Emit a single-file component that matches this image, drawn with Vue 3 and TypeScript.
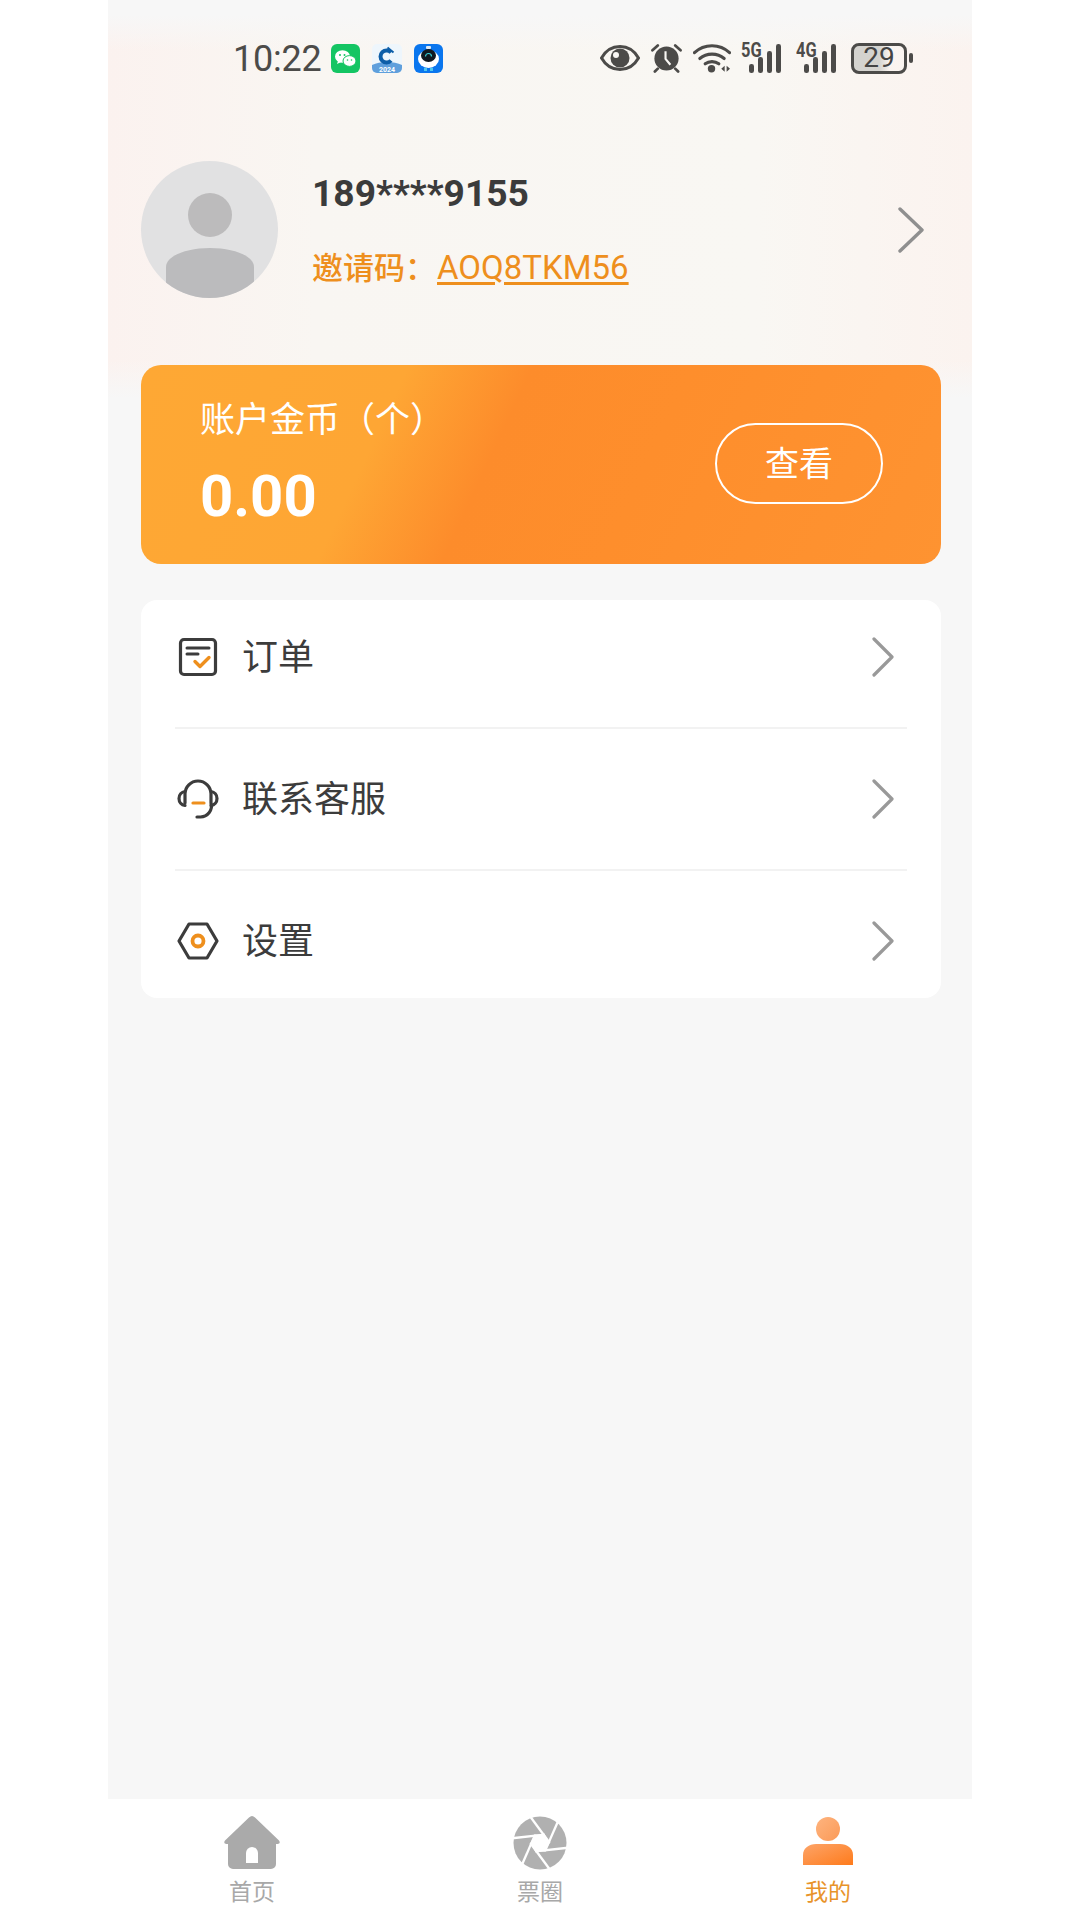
<script setup lang="ts">
const menu = [
  { key: 'order', label: '订单' },
  { key: 'service', label: '联系客服' },
  { key: 'settings', label: '设置' },
]
const tabs = [
  { key: 'home', label: '首页' },
  { key: 'circle', label: '票圈' },
  { key: 'me', label: '我的' },
]
const bars = [
  { x: 8, h: 9 }, { x: 17, h: 16 }, { x: 26, h: 22 }, { x: 35, h: 29 },
]
const blades = [0, 60, 120, 180, 240, 300]
</script>

<template>
  <div class="phone">
    <header class="status">
      <div class="status-left">
        <span class="time">10:22</span>
        <svg class="app" viewBox="0 0 29 29">
          <rect width="29" height="29" rx="6" fill="#14c563" />
          <ellipse cx="11.500" cy="12.500" rx="7.500" ry="6.300" fill="#fff" />
          <path d="M7 17l-1 3 4-2z" fill="#fff" />
          <ellipse cx="18.500" cy="17" rx="6.500" ry="5.400" fill="#fff" stroke="#14c563" stroke-width="1" />
          <circle cx="9" cy="11" r="1" fill="#14c563" />
          <circle cx="13.500" cy="11" r="1" fill="#14c563" />
          <circle cx="16.500" cy="16" r=".8" fill="#14c563" />
          <circle cx="20.500" cy="16" r=".8" fill="#14c563" />
        </svg>
        <svg class="app app-ccb" viewBox="0 0 30 29">
          <rect width="30" height="29" rx="5" fill="#eef6fc" />
          <path d="M0 21c8-4 22-4 30 0v3a5 5 0 0 1-5 5H5a5 5 0 0 1-5-5z" fill="#5f9fdc" />
          <path d="M19 8.500a6 6 0 1 0 0 8" fill="none" stroke="#0d5ea8" stroke-width="4" />
          <path d="M15.500 3.500l6 5" fill="none" stroke="#0d5ea8" stroke-width="2" />
          <text x="15" y="27.500" text-anchor="middle" class="app-year">2024</text>
        </svg>
        <svg class="app" viewBox="0 0 29 29">
          <rect width="29" height="29" rx="6" fill="#0a76ee" />
          <rect x="12" y="2" width="5" height="3" rx="1" fill="#dfeaf5" />
          <ellipse cx="14.500" cy="15" rx="10.500" ry="9" fill="#fff" />
          <ellipse cx="14.500" cy="11.500" rx="7.500" ry="6.500" fill="#101820" />
          <path d="M11.500 12.500a3 3 0 0 1 6 0" fill="none" stroke="#35d0d8" stroke-width="1.200" />
          <rect x="10" y="24" width="3" height="3" fill="#4fc8ef" />
          <rect x="16" y="24" width="3" height="3" fill="#4fc8ef" />
        </svg>
      </div>
      <div class="status-right">
        <svg class="s-eye" viewBox="0 0 40 26">
          <path d="M1.500 13C6 5 13 1.500 20 1.500S34 5 38.500 13C34 21 27 24.500 20 24.500S6 21 1.500 13z" fill="none" stroke="#4c4b49" stroke-width="3" />
          <circle cx="20" cy="13" r="9.500" fill="#4c4b49" />
          <circle cx="16" cy="10" r="3" fill="#f9f7f4" />
        </svg>
        <svg class="s-alarm" viewBox="0 0 32 30">
          <circle cx="16" cy="15.500" r="12.500" fill="#4c4b49" />
          <path d="M1.500 7L7 2M30.500 7L25 2M7 26l-3 3M25 26l3 3" stroke="#4c4b49" stroke-width="2.800" stroke-linecap="round" />
          <path d="M15 8v8l5 6" fill="none" stroke="#f9f7f4" stroke-width="2.200" />
        </svg>
        <svg class="s-wifi" viewBox="0 0 39 30">
          <path d="M1.500 9.500c10-9.500 26-9.500 36 0" fill="none" stroke="#4c4b49" stroke-width="3.200" stroke-linecap="round" />
          <path d="M7 15.500c7-6 18-6 25 0" fill="none" stroke="#4c4b49" stroke-width="3.200" stroke-linecap="round" />
          <path d="M12.500 21c4-3 10-3 14 0" fill="none" stroke="#4c4b49" stroke-width="3.200" stroke-linecap="round" />
          <circle cx="19" cy="26" r="3.800" fill="#4c4b49" />
          <path d="M29 26l3.500-3v6zM38 26l-3.500-3v6z" fill="#4c4b49" />
        </svg>
        <div class="signal">
          <span class="sig-label">5G</span>
          <svg class="sig-bars" viewBox="0 0 44 30">
            <rect v-for="b in bars" :key="b.x" :x="b.x" :y="30 - b.h" width="5" :height="b.h" rx="2.300" fill="#4c4b49" />
          </svg>
        </div>
        <div class="signal">
          <span class="sig-label">4G</span>
          <svg class="sig-bars" viewBox="0 0 44 30">
            <rect v-for="b in bars" :key="b.x" :x="b.x" :y="30 - b.h" width="5" :height="b.h" rx="2.300" fill="#4c4b49" />
          </svg>
        </div>
        <div class="battery"><span class="battery-num">29</span></div>
        <span class="battery-nub"></span>
      </div>
    </header>

    <section class="user">
      <svg class="avatar" viewBox="0 0 137 137">
        <defs>
          <clipPath id="avatar-clip"><circle cx="68.500" cy="68.500" r="68.500" /></clipPath>
        </defs>
        <circle cx="68.500" cy="68.500" r="68.500" fill="#e1e1e2" />
        <circle cx="69" cy="54" r="22" fill="#bcbbbc" />
        <path d="M25 137V106C25 95 45 87 69 87S113 95 113 106V137Z" fill="#bbbbbd" clip-path="url(#avatar-clip)" />
      </svg>
      <div class="user-info">
        <div class="user-name">189****9155</div>
        <div class="invite">
          <span class="invite-label">邀请码：</span><span class="invite-code">AOQ8TKM56</span>
        </div>
      </div>
      <svg class="user-arrow" viewBox="0 0 26 46">
        <path d="M2 2l22 21L2 44" fill="none" stroke="#8f8f8f" stroke-width="3.400" stroke-linecap="round" stroke-linejoin="round" />
      </svg>
    </section>

    <section class="coin-card">
      <div class="coin-info">
        <div class="coin-label">账户金币（个）</div>
        <div class="coin-value">0.00</div>
      </div>
      <div class="coin-btn"><span class="coin-btn-text">查看</span></div>
    </section>

    <section class="menu">
      <template v-for="(item, i) in menu" :key="item.key">
        <div v-if="i > 0" class="menu-sep"></div>
        <div class="menu-row">
          <svg v-if="item.key === 'order'" class="menu-icon" viewBox="0 0 42 42">
            <rect x="3.500" y="3.500" width="35" height="35" rx="3.500" fill="none" stroke="#3c3c3c" stroke-width="3.200" />
            <path d="M10 12h22M10 18h11" stroke="#3c3c3c" stroke-width="3" stroke-linecap="round" />
            <path d="M18 25.500l5 5 9-9" fill="none" stroke="#ee8f1d" stroke-width="3.400" stroke-linecap="round" stroke-linejoin="round" />
          </svg>
          <svg v-else-if="item.key === 'service'" class="menu-icon" viewBox="0 0 42 42">
            <path d="M8 25V16a13 13 0 0 1 26 0v9a11 11 0 0 1-11 14h-3" fill="none" stroke="#3c3c3c" stroke-width="3.200" stroke-linecap="round" />
            <path d="M8 13.500a7 7 0 0 0-6 7 7 7 0 0 0 6 7M34 13.500a7 7 0 0 1 6 7 7 7 0 0 1-6 7" fill="none" stroke="#3c3c3c" stroke-width="3.200" stroke-linecap="round" />
            <path d="M16 25h11" stroke="#ee8f1d" stroke-width="3.200" stroke-linecap="round" />
          </svg>
          <svg v-else class="menu-icon" viewBox="0 0 42 42">
            <path d="M12 4h18l10 17-10 17H12L2 21z" fill="none" stroke="#3c3c3c" stroke-width="3.200" stroke-linejoin="round" />
            <circle cx="21" cy="21" r="5.500" fill="none" stroke="#ee8f1d" stroke-width="3.800" />
          </svg>
          <span class="menu-label">{{ item.label }}</span>
          <svg class="menu-arrow" viewBox="0 0 22 40">
            <path d="M2 2l18 18L2 38" fill="none" stroke="#999" stroke-width="3.200" stroke-linecap="round" stroke-linejoin="round" />
          </svg>
        </div>
      </template>
    </section>

    <nav class="tabbar">
      <div v-for="tab in tabs" :key="tab.key" class="tab" :class="{ active: tab.key === 'me' }">
        <svg v-if="tab.key === 'home'" class="tab-icon" viewBox="0 0 58 54">
          <path d="M29 0c1 0 2 .500 3 1.500l24 23c1.500 2 .500 3.500-1.500 3.500H53v20a5 5 0 0 1-5 5H10a5 5 0 0 1-5-5V28H3.500c-2 0-3-1.500-1.500-3.500l24-23C27 .500 28 0 29 0z" fill="#aaa" />
          <path d="M23 47V37a6 6 0 0 1 12 0v10z" fill="#fff" />
        </svg>
        <svg v-else-if="tab.key === 'circle'" class="tab-icon" viewBox="0 0 54 54">
          <circle cx="27" cy="27" r="26.500" fill="#b0b0b0" />
          <polygon points="36.700,27 31.850,35.400 22.150,35.400 17.300,27 22.150,18.600 31.850,18.600" fill="#fff" />
          <g v-for="a in blades" :key="a" :transform="`rotate(${a} 27 27)`">
            <path d="M17.200 0.500L36.700 27" stroke="#fff" stroke-width="2.300" />
          </g>
        </svg>
        <svg v-else class="tab-icon" viewBox="0 0 50 54">
          <defs>
            <linearGradient id="me-head" x1="0" y1="0" x2="1" y2="1">
              <stop offset="0" stop-color="#feb47f" />
              <stop offset="1" stop-color="#fb9a57" />
            </linearGradient>
            <linearGradient id="me-body" x1="0" y1="0" x2="1" y2="1">
              <stop offset="0" stop-color="#fda468" />
              <stop offset="1" stop-color="#fe7b1c" />
            </linearGradient>
          </defs>
          <circle cx="25" cy="13" r="12" fill="url(#me-head)" />
          <path d="M0 49V39C0 32 6 28 13 28H37C44 28 50 32 50 39V49Z" fill="url(#me-body)" />
        </svg>
        <span class="tab-label">{{ tab.label }}</span>
      </div>
    </nav>
  </div>
</template>

<style scoped>
.phone {
  box-sizing: border-box;
  width: 864px;
  height: 1920px;
  margin-left: 108px;
  display: flex;
  flex-direction: column;
  background-color: #f7f7f7;
  background-image:
    linear-gradient(to bottom, #f7f7f7 15px, rgba(247, 247, 247, 0) 50px, rgba(247, 247, 247, 0) 360px, #f7f7f7 398px),
    linear-gradient(to right, #fbf2ef 0, #f9f6f2 24%, #f9f7f3 75%, #fbf3ef 100%);
  background-size: 100% 398px, 100% 398px;
  background-repeat: no-repeat;
  font-family: Roboto, "Noto Sans CJK SC", sans-serif;
  color: #3b3b3b;
}
.status {
  height: 116px;
  flex: none;
  display: flex;
  align-items: center;
  justify-content: space-between;
  padding: 0 59px 0 125px;
  color: #4c4b49;
}
.status-left, .status-right { display: flex; align-items: center; }
.time { font-size: 36px; line-height: 40px; margin-right: 9px; margin-top: 2px; letter-spacing: -0.2px; }
.app { width: 29px; height: 29px; margin-right: 12px; display: block; }
.app-ccb { width: 30px; }
.app-year { font: 700 7px Roboto, sans-serif; fill: #fff; }
.s-eye { width: 40px; height: 26px; margin-right: 11px; }
.s-alarm { width: 31px; height: 30px; margin-right: 11px; }
.s-wifi { width: 38px; height: 30px; margin-right: 10px; }
.signal { position: relative; width: 44px; height: 30px; margin-right: 11px; }
.sig-bars { display: block; width: 44px; height: 30px; }
.sig-label {
  position: absolute;
  left: 0;
  top: -4px;
  font: 700 21px/22px Roboto, sans-serif;
  transform: scaleX(0.78);
  transform-origin: left center;
}
.battery {
  box-sizing: border-box;
  width: 56px;
  height: 31px;
  border: 3px solid #4c4b49;
  border-radius: 8px;
  display: flex;
  align-items: center;
  justify-content: center;
  background: linear-gradient(to right, #d4d3cf 0, #d4d3cf 50%, transparent 72%);
}
.battery-num { font-size: 28px; line-height: 26px; color: #444; }
.battery-nub { width: 4px; height: 10px; margin-left: 2px; background: #4c4b49; border-radius: 2px; }

.user {
  flex: none;
  height: 137px;
  margin-top: 45px;
  padding: 0 48px 0 33px;
  display: flex;
  align-items: center;
}
.avatar { width: 137px; height: 137px; flex: none; }
.user-info { flex: 1; margin-left: 34px; }
.user-name { font-size: 37.200px; font-weight: 700; line-height: 44px; margin-top: 0; }
.invite { margin-top: 33px; font-size: 31px; line-height: 40px; font-weight: 500; color: #ee8f1d; }
.invite-code { margin-left: 1px; font-size: 33px; font-weight: 400; text-decoration: underline; text-underline-offset: 3px; }
.user-arrow { width: 26px; height: 46px; flex: none; }

.coin-card {
  flex: none;
  box-sizing: border-box;
  width: 800px;
  height: 199px;
  margin: 67px 0 0 33px;
  padding: 0 58px 0 59px;
  border-radius: 20px;
  display: flex;
  align-items: center;
  justify-content: space-between;
  color: #fff;
  background: linear-gradient(115deg, #fea834 0, #fea634 30%, #fd8c2b 44%, #fe8e2c 62%, #fe9331 100%);
}
.coin-info { margin-top: -2px; }
.coin-label { font-size: 35px; line-height: 44px; }
.coin-value { margin-top: 20px; font-size: 58px; line-height: 66px; font-weight: 700; }
.coin-btn {
  box-sizing: border-box;
  width: 168px;
  height: 81px;
  margin-top: -2px;
  border: 2px solid #fff;
  border-radius: 41px;
  display: flex;
  align-items: center;
  justify-content: center;
  font-size: 34px;
}
.coin-btn-text { margin-bottom: 5px; }

.menu {
  flex: none;
  box-sizing: border-box;
  width: 800px;
  margin: 36px 0 0 33px;
  padding: 0 34px;
  background: #fff;
  border-radius: 16px;
}
.menu-row { height: 114px; display: flex; align-items: center; }
.menu-sep { height: 2px; margin: 13px 0; background: #f2f2f2; }
.menu-icon { width: 42px; height: 42px; flex: none; margin: 0 23px 0 2px; }
.menu-label { flex: 1; font-size: 36px; line-height: 46px; color: #3c3c3c; margin-top: 1px; }
.menu-arrow { width: 22px; height: 40px; flex: none; margin-right: 13px; }

.tabbar {
  flex: none;
  height: 121px;
  margin-top: auto;
  background: #fff;
  display: grid;
  grid-template-columns: repeat(3, 1fr);
}
.tab {
  display: flex;
  flex-direction: column;
  align-items: center;
  padding-top: 17px;
  color: #a8a8a8;
}
.tab.active { color: #e8932a; }
.tab-icon { width: 58px; height: 54px; display: block; }
.tab-label { margin-top: 8px; font-size: 23px; line-height: 30px; }
</style>

<style>
html, body { background: #fff; }
</style>
